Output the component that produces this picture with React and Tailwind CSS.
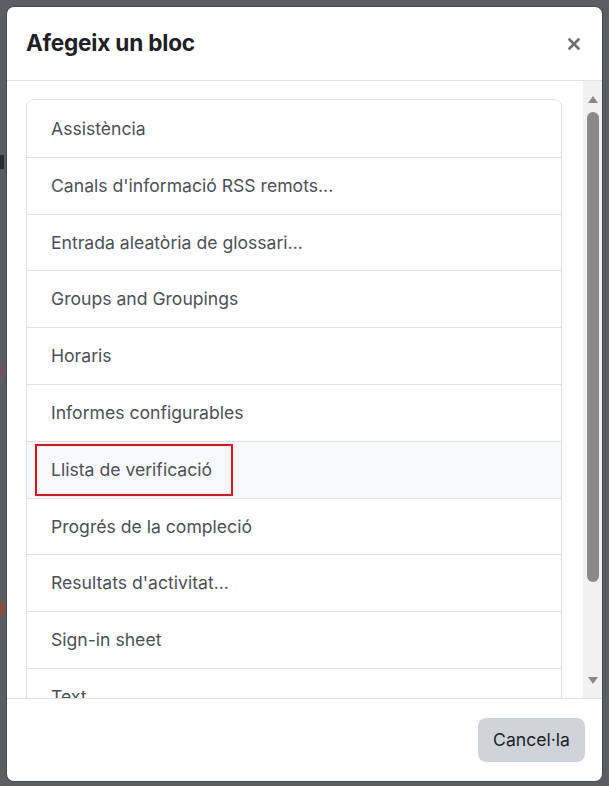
import React from 'react';

const blocks = [
  "Assistència",
  "Canals d'informació RSS remots...",
  "Entrada aleatòria de glossari...",
  "Groups and Groupings",
  "Horaris",
  "Informes configurables",
  "Llista de verificació",
  "Progrés de la compleció",
  "Resultats d'activitat...",
  "Sign-in sheet",
  "Text",
  "Usuaris connectats",
];

const BlockItem = ({ label, marked }) =>
  <div className={"relative flex items-center h-[56.8px] px-6 border-t border-[#dee2e6] first:border-t-0 text-[17.6px] leading-none text-[#4b5157] " + (marked ? "bg-[#f8f9fa]" : "bg-white")}>
    {marked && <div className="absolute left-[8px] top-[2px] w-[198px] h-[52px] border-2 border-[#e8101a]" />}
    <span className="relative">{label}</span>
  </div>

const FakeScrollbar = () =>
  <div className="w-[19px] shrink-0 bg-[#f1f1f1] flex flex-col items-center">
    <svg width="12" height="10" viewBox="0 0 12 10" className="mt-[14px]">
      <path d="M6 1 L11 8 L1 8 Z" fill="#8a8a8a" />
    </svg>
    <div className="mt-[7px] w-[12px] h-[470px] rounded-full bg-[#8a8a8a]" />
    <div className="flex-1" />
    <svg width="12" height="10" viewBox="0 0 12 10" className="mb-[13px]">
      <path d="M1 2 L11 2 L6 9 Z" fill="#8a8a8a" />
    </svg>
  </div>

export default function App() {
  return (
    <div className="relative w-[609px] h-[786px] bg-[#5b5e61] pt-[6px] px-[6px] pb-[4px] overflow-hidden" style={{ fontFamily: "Inter, 'Noto Sans', sans-serif" }}>
      {/* bits of the page behind the backdrop */}
      <div className="absolute left-0 top-[155px] w-[4px] h-[14px] bg-[#2b2e31]" />
      <div className="absolute left-0 top-[365px] w-[3px] h-[12px] bg-[#7a4a66]" />
      <div className="absolute left-0 top-[602px] w-[4px] h-[14px] bg-[#8a4a3a]" />

      <div className="relative h-full flex flex-col bg-white rounded-[8px] border border-[#45484b] overflow-hidden">
        <div className="h-[74px] shrink-0 flex items-center justify-between pl-[19px] pr-[22px] border-b border-[#dee2e6]">
          <h2 className="text-[22.6px] font-bold text-[#1d2125] tracking-[-0.2px] -mt-[2px]">Afegeix un bloc</h2>
          <svg width="12" height="12" viewBox="0 0 12 12">
            <path d="M1.5 1.5 L10.5 10.5 M10.5 1.5 L1.5 10.5" stroke="#6a6e72" strokeWidth="2.6" strokeLinecap="round" />
          </svg>
        </div>

        <div className="flex-1 min-h-0 flex border-b border-[#dee2e6]">
          <div className="flex-1 min-w-0 overflow-hidden pt-[18px] pl-[19px] pr-[21px]">
            <div className="border border-[#dee2e6] rounded-t-[8px] overflow-hidden">
              {blocks.map((b) => (
                <BlockItem key={b} label={b} marked={b === "Llista de verificació"} />
              ))}
            </div>
          </div>
          <FakeScrollbar />
        </div>

        <div className="h-[82px] shrink-0 flex items-center justify-end pr-[17px]">
          <button className="h-[44px] px-[15px] rounded-[8px] bg-[#ced4da] text-[17.6px] leading-none text-[#1d2125]">Cancel·la</button>
        </div>
      </div>
    </div>
  );
}
